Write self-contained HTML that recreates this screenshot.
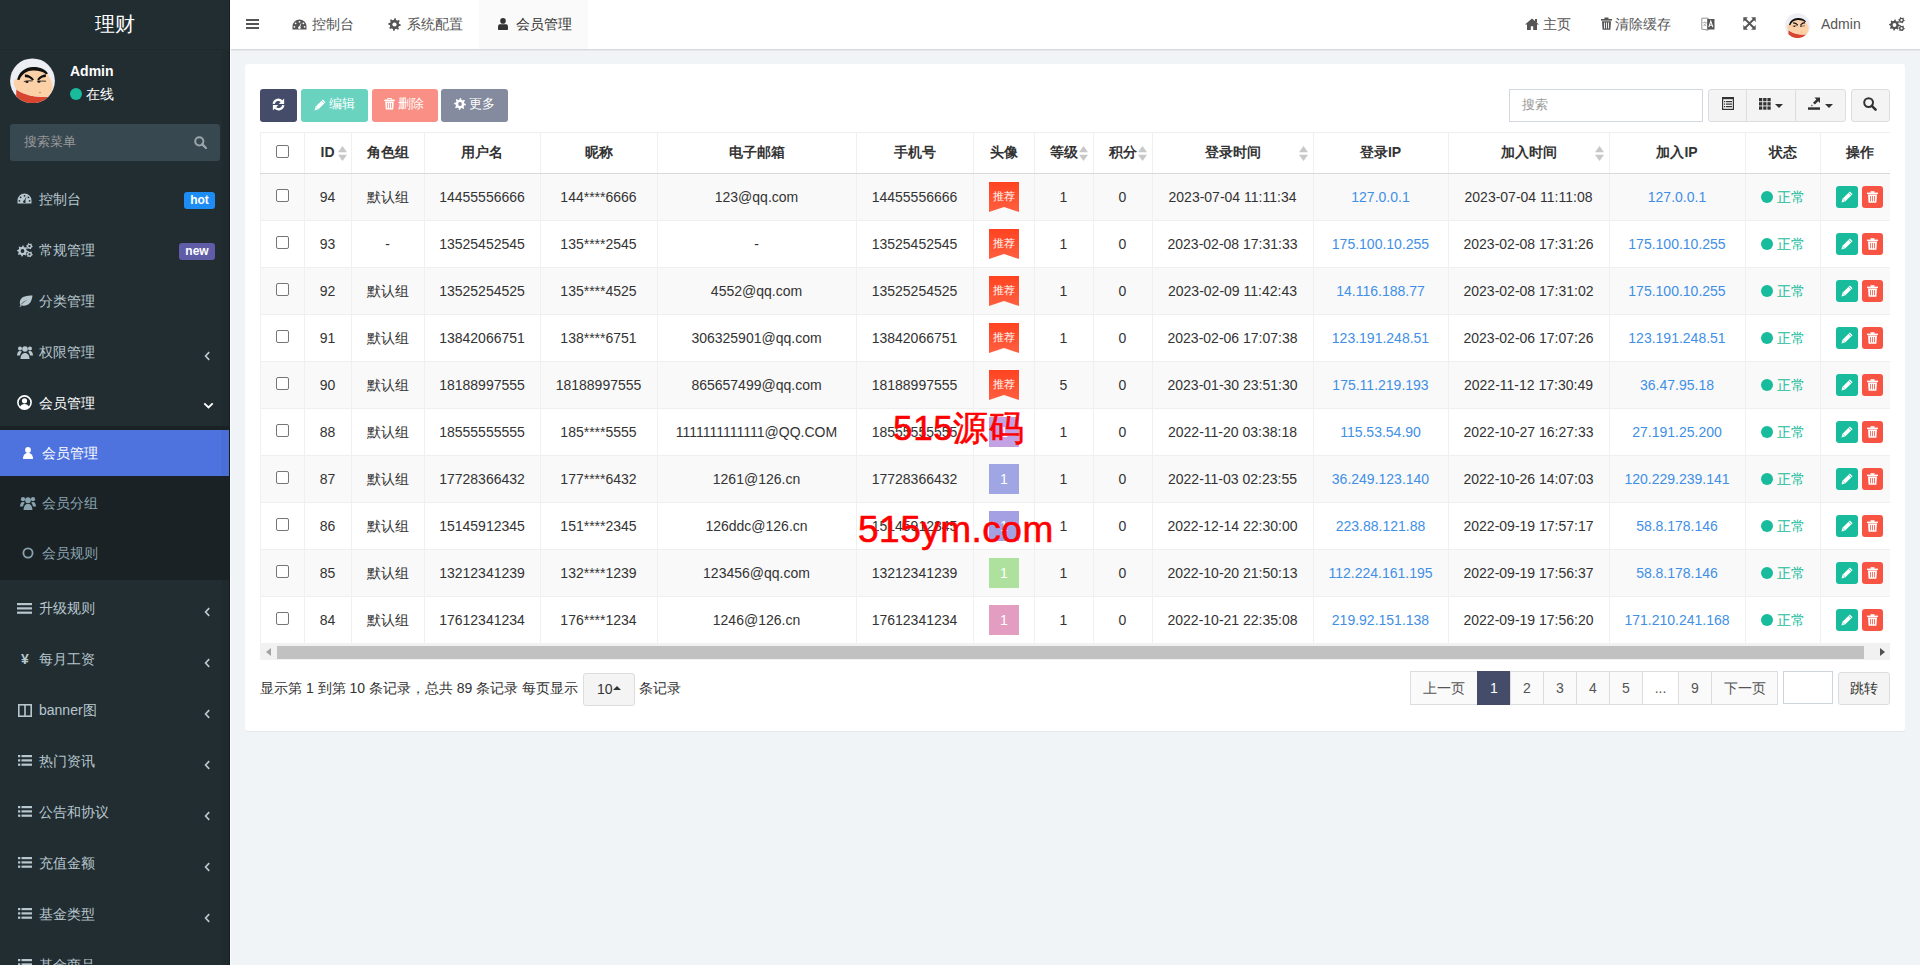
<!DOCTYPE html><html><head><meta charset="utf-8"><title>会员管理</title><style>
*{box-sizing:border-box;margin:0;padding:0}
html,body{width:1920px;height:965px;overflow:hidden}
body{background:#f1f4f6;font-family:"Liberation Sans",sans-serif;font-size:14px;color:#333;position:relative}
.a{position:absolute}
.sb{position:absolute;left:0;top:0;width:230px;height:965px;background:#222d32}
.mi{position:absolute;left:0;width:230px;height:20px;line-height:20px;color:#b8c7ce;font-size:14px;white-space:nowrap}
.mi .t{position:absolute;left:39px;top:0}
.mi svg{position:absolute}
.hd{position:absolute;left:230px;top:0;width:1690px;height:49px;background:#fff}
.nav{position:absolute;top:0;height:49px;line-height:49px;color:#555;font-size:14px;white-space:nowrap}
.nav svg{position:absolute}
.panel{position:absolute;left:245px;top:64px;width:1660px;height:667px;background:#fff;border-radius:3px;box-shadow:0 1px 1px rgba(0,0,0,.05)}
.btn{position:absolute;top:89px;height:33px;border-radius:3px;color:#fff;font-size:13px;line-height:33px;white-space:nowrap}
.btn svg{position:absolute}
.cell{position:absolute;height:46px;line-height:46px;text-align:center;white-space:nowrap;font-size:14px;color:#333}
.hcell{position:absolute;height:41px;line-height:41px;text-align:center;white-space:nowrap;font-size:14px;font-weight:bold;color:#333}
.vl{position:absolute;width:1px;background:#f0f0f0}
.hl{position:absolute;height:1px;background:#efefef}
.lk{color:#3f8fe6}
.pg{position:absolute;top:671px;height:34px;line-height:32px;border:1px solid #ddd;background:#fafafa;color:#555;text-align:center;font-size:14px}
</style></head><body>
<div class="sb">
<div class="a" style="left:222px;top:49px;width:7px;height:916px;background:#20292e"></div>
<div class="a" style="left:229px;top:0;width:1px;height:965px;background:#151d21"></div>
<div class="a" style="left:0;top:0;width:230px;height:49px;line-height:48px;text-align:center;color:#fff;font-size:20px">理财</div>
<div class="a" style="left:0;top:49px;width:222px;height:1px;background:#1f282d"></div>
<svg style="position:absolute;left:10px;top:58px" width="45" height="45" viewBox="0 0 45 45"><defs><clipPath id="cp10"><circle cx="22.5" cy="22.8" r="22.4"/></clipPath></defs><g clip-path="url(#cp10)"><rect width="45" height="46" fill="#eceef3"/><path d="M6.3 31.2 C9 33.5 16 37 23.9 38.2 C30 39 35 39 38.5 38.7 L42 48 L6 48z" fill="#d8462f"/><path d="M3.7 25 C3.5 22 5.5 20.5 7.8 20.5 C10 14 16 10.5 23 10.5 C30 10.5 35 13 37.5 16.5 C40.5 20 42.8 25 42.6 29.5 C42.5 33 41 36.5 38.5 38.7 C35 39 30 39 23.9 38.2 C16 37 9 33.5 6.3 31.2 C5 30 3.8 27.5 3.7 25z" fill="#fdd1a8"/><path d="M7.2 21.8 C8.5 14.5 15 9.3 23 9 C30 8.8 35.5 11.5 38 15.5 L36 16.2 C33 13.6 28.5 12.4 23 12.5 C16 12.8 11.5 16.5 9.5 22z" fill="#111"/><path d="M14.8 16.6 C18.5 16.4 21.8 18.6 24 21.4 L22.4 22.6 C20.3 20.2 17.8 19 15 19.3z" fill="#111"/><path d="M36 16.2 C32.5 16.2 29.3 18.5 27.2 21.2 L28.7 22.4 C30.7 20 33.2 18.9 35.8 18.9z" fill="#111"/><path d="M13.8 23.6 C16 22.8 19 22.6 22.5 23" stroke="#222" stroke-width="0.9" fill="none"/><path d="M27 23.2 C30 23 33 23 36 23.2" stroke="#222" stroke-width="0.9" fill="none"/><ellipse cx="17" cy="24" rx="1.6" ry="1" fill="#111"/><ellipse cx="29" cy="23.8" rx="1.6" ry="1" fill="#111"/><path d="M29 34.5 l2 0" stroke="#a06040" stroke-width="0.6"/></g></svg>
<div class="a" style="left:70px;top:61px;height:20px;line-height:20px;color:#fff;font-weight:bold;font-size:14px">Admin</div>
<div class="a" style="left:70px;top:88px;width:12px;height:12px;border-radius:50%;background:#18bc9c"></div>
<div class="a" style="left:86px;top:84px;height:20px;line-height:20px;color:#fff;font-size:14px">在线</div>
<div class="a" style="left:10px;top:124px;width:210px;height:37px;background:#374850;border-radius:3px"></div>
<div class="a" style="left:24px;top:132px;height:20px;line-height:20px;color:#999;font-size:13px">搜索菜单</div>
<svg style="position:absolute;left:194px;top:136px" width="13" height="13" viewBox="0 0 13 13" fill="currentColor" ><circle cx="5.3" cy="5.3" r="4.1" fill="none" stroke="#9aa6ab" stroke-width="2"/><path d="M8.3 8.3L12 12" stroke="#9aa6ab" stroke-width="2.4" stroke-linecap="round"/></svg>
<div class="mi" style="top:189px;color:#b8c7ce"><svg style="left:17px;top:4px" width="15" height="11" viewBox="0 0 15 11" fill="currentColor"><path d="M7.5 0.5A7 7 0 0 0 0.5 7.5v3h14v-3A7 7 0 0 0 7.5 0.5z"/><g fill="#222d32"><circle cx="7.5" cy="2.8" r="0.9"/><circle cx="3.6" cy="4.3" r="0.9"/><circle cx="2.4" cy="7.8" r="0.9"/><circle cx="12.6" cy="7.8" r="0.9"/><circle cx="11.4" cy="4.3" r="0.9"/><path d="M9.6 3.2L8.1 8.6 6.7 8.3z"/><circle cx="7.4" cy="8.8" r="1.3"/></g></svg><span class="t" style="left:39px">控制台</span><div class="a" style="left:184px;top:3px;width:31px;height:17px;line-height:17px;border-radius:3px;background:#1d8df5;color:#fff;font-weight:bold;font-size:12px;text-align:center">hot</div></div>
<div class="mi" style="top:240px;color:#b8c7ce"><svg style="left:17px;top:3px" width="16" height="14" viewBox="0 0 16 14" fill="currentColor"><polygon points="11.00,8.00 10.89,9.07 9.06,9.47 8.70,10.14 9.39,11.89 8.56,12.57 6.97,11.56 6.25,11.78 5.50,13.50 4.43,13.39 4.03,11.56 3.36,11.20 1.61,11.89 0.93,11.06 1.94,9.47 1.72,8.75 0.00,8.00 0.11,6.93 1.94,6.53 2.30,5.86 1.61,4.11 2.44,3.43 4.03,4.44 4.75,4.22 5.50,2.50 6.57,2.61 6.97,4.44 7.64,4.80 9.39,4.11 10.07,4.94 9.06,6.53 9.28,7.25"/><circle cx="5.5" cy="8" r="3.96"/><circle cx="5.5" cy="8" r="1.9" fill="#222d32"/><polygon points="15.70,3.20 15.59,4.03 14.44,4.32 14.08,4.78 14.10,5.97 13.33,6.29 12.50,5.44 11.92,5.36 10.90,5.97 10.24,5.46 10.56,4.32 10.34,3.78 9.30,3.20 9.41,2.37 10.56,2.08 10.92,1.62 10.90,0.43 11.67,0.11 12.50,0.96 13.08,1.04 14.10,0.43 14.76,0.94 14.44,2.08 14.66,2.62"/><circle cx="12.5" cy="3.2" r="2.30"/><circle cx="12.5" cy="3.2" r="1.1" fill="#222d32"/><polygon points="15.70,11.30 15.59,12.13 14.44,12.42 14.08,12.88 14.10,14.07 13.33,14.39 12.50,13.54 11.92,13.46 10.90,14.07 10.24,13.56 10.56,12.42 10.34,11.88 9.30,11.30 9.41,10.47 10.56,10.18 10.92,9.72 10.90,8.53 11.67,8.21 12.50,9.06 13.08,9.14 14.10,8.53 14.76,9.04 14.44,10.18 14.66,10.72"/><circle cx="12.5" cy="11.3" r="2.30"/><circle cx="12.5" cy="11.3" r="1.1" fill="#222d32"/></svg><span class="t" style="left:39px">常规管理</span><div class="a" style="left:179px;top:3px;width:36px;height:17px;line-height:17px;border-radius:3px;background:#605ca8;color:#fff;font-weight:bold;font-size:12px;text-align:center">new</div></div>
<div class="mi" style="top:291px;color:#b8c7ce"><svg style="left:18px;top:4px" width="15" height="12" viewBox="0 0 15 12" fill="currentColor"><path d="M14.5 0.5C9 0.5 3.5 1 2 6c-0.5 2 0 3.5 0.5 4.2C4 7.5 7 5.5 10 4.5 7 6 4 8.5 1.5 11.5l0.8 0.5c0.6-0.8 1.1-1.4 1.6-1.8C5.5 11 8 11 10.2 9.6 13.8 7.2 14 3 14.5 0.5z"/></svg><span class="t" style="left:39px">分类管理</span></div>
<div class="mi" style="top:342px;color:#b8c7ce"><svg style="left:17px;top:3px" width="16" height="14" viewBox="0 0 16 14" fill="currentColor"><circle cx="8" cy="4" r="2.8"/><path d="M3.5 14c0-3.5 1.8-6 4.5-6s4.5 2.5 4.5 6z"/><circle cx="3" cy="3.5" r="2"/><circle cx="13" cy="3.5" r="2"/><path d="M0 10.5c0-2.5 1.2-4.5 3-4.5 0.8 0 1.4 0.3 1.9 0.8C3.8 7.8 3.2 9 3 10.5z"/><path d="M16 10.5c0-2.5-1.2-4.5-3-4.5-0.8 0-1.4 0.3-1.9 0.8 1.1 1 1.7 2.2 1.9 3.7z"/></svg><span class="t" style="left:39px">权限管理</span><svg style="left:204px;top:9px" width="7" height="10" viewBox="0 0 7 10"><path d="M5.2 1.2L1.6 5l3.6 3.8" stroke="#b8c7ce" stroke-width="1.7" fill="none"/></svg></div>
<div class="mi" style="top:393px;color:#fff"><svg style="left:17px;top:2px" width="15" height="15" viewBox="0 0 15 15" fill="currentColor"><circle cx="7.5" cy="7.5" r="6.6" fill="none" stroke="currentColor" stroke-width="1.6"/><circle cx="7.5" cy="5.8" r="2.6"/><path d="M2.8 12c1-2 2.6-3 4.7-3s3.7 1 4.7 3c-1.2 1.2-2.8 2-4.7 2s-3.5-0.8-4.7-2z"/></svg><span class="t" style="left:39px">会员管理</span><svg style="left:203px;top:9px" width="11" height="8" viewBox="0 0 11 8"><path d="M1.3 1.3l4.2 4.2 4.2-4.2" stroke="#fff" stroke-width="1.8" fill="none"/></svg></div>
<div class="a" style="left:0;top:426px;width:229px;height:154px;background:#1a2226"></div>
<div class="a" style="left:0;top:430px;width:229px;height:46px;background:#4e73df"></div>
<div class="a" style="left:221px;top:430px;width:8px;height:46px;background:#4a6ed6"></div>
<div class="mi" style="top:443px;color:#fff"><svg style="left:23px;top:4px" width="10" height="12" viewBox="0 0 10 12" fill="currentColor"><circle cx="5" cy="3" r="2.9"/><path d="M0 12c0-3.5 1.5-6 5-6s5 2.5 5 6z"/></svg><span class="t" style="left:42px">会员管理</span></div>
<div class="mi" style="top:493px;color:#8aa4af"><svg style="left:20px;top:3px" width="16" height="14" viewBox="0 0 16 14" fill="currentColor"><circle cx="8" cy="4.2" r="2.9"/><path d="M3.6 14c0-3.6 1.8-6.2 4.4-6.2s4.4 2.6 4.4 6.2z"/><circle cx="3" cy="3.2" r="2.1"/><circle cx="13" cy="3.2" r="2.1"/><path d="M0 10.5c0-2.6 1.2-4.6 3-4.6 0.8 0 1.4 0.3 1.9 0.8C3.8 7.8 3.2 9 3 10.5z"/><path d="M16 10.5c0-2.6-1.2-4.6-3-4.6-0.8 0-1.4 0.3-1.9 0.8 1.1 1 1.7 2.2 1.9 3.7z"/></svg><span class="t" style="left:42px">会员分组</span></div>
<div class="mi" style="top:543px;color:#8aa4af"><svg style="left:22px;top:4px" width="12" height="12" viewBox="0 0 12 12" fill="currentColor"><circle cx="6" cy="6" r="4.6" fill="none" stroke="currentColor" stroke-width="1.8"/></svg><span class="t" style="left:42px">会员规则</span></div>
<div class="mi" style="top:598px;color:#b8c7ce"><svg style="left:17px;top:5px" width="15" height="11" viewBox="0 0 15 11" fill="currentColor"><rect x="0" y="0" width="15" height="2.2"/><rect x="0" y="4.3" width="15" height="2.2"/><rect x="0" y="8.6" width="15" height="2.2"/></svg><span class="t" style="left:39px">升级规则</span><svg style="left:204px;top:9px" width="7" height="10" viewBox="0 0 7 10"><path d="M5.2 1.2L1.6 5l3.6 3.8" stroke="#b8c7ce" stroke-width="1.7" fill="none"/></svg></div>
<div class="mi" style="top:649px;color:#b8c7ce"><span class="a" style="left:21px;top:0;font-weight:bold;font-size:14px">¥</span><span class="t" style="left:39px">每月工资</span><svg style="left:204px;top:9px" width="7" height="10" viewBox="0 0 7 10"><path d="M5.2 1.2L1.6 5l3.6 3.8" stroke="#b8c7ce" stroke-width="1.7" fill="none"/></svg></div>
<div class="mi" style="top:700px;color:#b8c7ce"><svg style="left:18px;top:4px" width="14" height="13" viewBox="0 0 14 13" fill="currentColor"><rect x="0.8" y="0.8" width="12.4" height="11.4" fill="none" stroke="currentColor" stroke-width="1.6"/><rect x="6.2" y="0.8" width="1.6" height="11.4"/></svg><span class="t" style="left:39px">banner图</span><svg style="left:204px;top:9px" width="7" height="10" viewBox="0 0 7 10"><path d="M5.2 1.2L1.6 5l3.6 3.8" stroke="#b8c7ce" stroke-width="1.7" fill="none"/></svg></div>
<div class="mi" style="top:751px;color:#b8c7ce"><svg style="left:18px;top:4px" width="14" height="11" viewBox="0 0 14 11" fill="currentColor"><rect x="0" y="0" width="2.3" height="2.2"/><rect x="0" y="4.3" width="2.3" height="2.2"/><rect x="0" y="8.6" width="2.3" height="2.2"/><rect x="3.5" y="0" width="10.5" height="2.2"/><rect x="3.5" y="4.3" width="10.5" height="2.2"/><rect x="3.5" y="8.6" width="10.5" height="2.2"/></svg><span class="t" style="left:39px">热门资讯</span><svg style="left:204px;top:9px" width="7" height="10" viewBox="0 0 7 10"><path d="M5.2 1.2L1.6 5l3.6 3.8" stroke="#b8c7ce" stroke-width="1.7" fill="none"/></svg></div>
<div class="mi" style="top:802px;color:#b8c7ce"><svg style="left:18px;top:4px" width="14" height="11" viewBox="0 0 14 11" fill="currentColor"><rect x="0" y="0" width="2.3" height="2.2"/><rect x="0" y="4.3" width="2.3" height="2.2"/><rect x="0" y="8.6" width="2.3" height="2.2"/><rect x="3.5" y="0" width="10.5" height="2.2"/><rect x="3.5" y="4.3" width="10.5" height="2.2"/><rect x="3.5" y="8.6" width="10.5" height="2.2"/></svg><span class="t" style="left:39px">公告和协议</span><svg style="left:204px;top:9px" width="7" height="10" viewBox="0 0 7 10"><path d="M5.2 1.2L1.6 5l3.6 3.8" stroke="#b8c7ce" stroke-width="1.7" fill="none"/></svg></div>
<div class="mi" style="top:853px;color:#b8c7ce"><svg style="left:18px;top:4px" width="14" height="11" viewBox="0 0 14 11" fill="currentColor"><rect x="0" y="0" width="2.3" height="2.2"/><rect x="0" y="4.3" width="2.3" height="2.2"/><rect x="0" y="8.6" width="2.3" height="2.2"/><rect x="3.5" y="0" width="10.5" height="2.2"/><rect x="3.5" y="4.3" width="10.5" height="2.2"/><rect x="3.5" y="8.6" width="10.5" height="2.2"/></svg><span class="t" style="left:39px">充值金额</span><svg style="left:204px;top:9px" width="7" height="10" viewBox="0 0 7 10"><path d="M5.2 1.2L1.6 5l3.6 3.8" stroke="#b8c7ce" stroke-width="1.7" fill="none"/></svg></div>
<div class="mi" style="top:904px;color:#b8c7ce"><svg style="left:18px;top:4px" width="14" height="11" viewBox="0 0 14 11" fill="currentColor"><rect x="0" y="0" width="2.3" height="2.2"/><rect x="0" y="4.3" width="2.3" height="2.2"/><rect x="0" y="8.6" width="2.3" height="2.2"/><rect x="3.5" y="0" width="10.5" height="2.2"/><rect x="3.5" y="4.3" width="10.5" height="2.2"/><rect x="3.5" y="8.6" width="10.5" height="2.2"/></svg><span class="t" style="left:39px">基金类型</span><svg style="left:204px;top:9px" width="7" height="10" viewBox="0 0 7 10"><path d="M5.2 1.2L1.6 5l3.6 3.8" stroke="#b8c7ce" stroke-width="1.7" fill="none"/></svg></div>
<div class="mi" style="top:955px;color:#b8c7ce"><svg style="left:18px;top:4px" width="14" height="11" viewBox="0 0 14 11" fill="currentColor"><rect x="0" y="0" width="2.3" height="2.2"/><rect x="0" y="4.3" width="2.3" height="2.2"/><rect x="0" y="8.6" width="2.3" height="2.2"/><rect x="3.5" y="0" width="10.5" height="2.2"/><rect x="3.5" y="4.3" width="10.5" height="2.2"/><rect x="3.5" y="8.6" width="10.5" height="2.2"/></svg><span class="t" style="left:39px">基金商品</span></div>
</div>
<div class="hd">
<div class="a" style="left:249px;top:0;width:109px;height:49px;background:#fafafa"></div>
</div>
<div class="a" style="left:230px;top:49px;width:1690px;height:1px;background:#d7dadc"></div>
<div class="a" style="left:230px;top:50px;width:1690px;height:1px;background:#e6e9eb"></div>
<div class="a" style="left:230px;top:49px;width:1px;height:916px;background:#fafbfc"></div>
<svg style="position:absolute;left:246px;top:19px;color:#555" width="13" height="10" viewBox="0 0 13 10" fill="currentColor"><rect y="0" width="13" height="2"/><rect y="4" width="13" height="2"/><rect y="8" width="13" height="2"/></svg>
<svg style="position:absolute;left:292px;top:19px;color:#555" width="15" height="11" viewBox="0 0 15 11" fill="currentColor"><path d="M7.5 0.5A7 7 0 0 0 0.5 7.5v3h14v-3A7 7 0 0 0 7.5 0.5z"/><g fill="#fff"><circle cx="7.5" cy="2.8" r="0.9"/><circle cx="3.6" cy="4.3" r="0.9"/><circle cx="2.4" cy="7.8" r="0.9"/><circle cx="12.6" cy="7.8" r="0.9"/><circle cx="11.4" cy="4.3" r="0.9"/><path d="M9.6 3.2L8.1 8.6 6.7 8.3z"/><circle cx="7.4" cy="8.8" r="1.3"/></g></svg>
<div class="a" style="left:312px;top:14px;height:20px;line-height:20px;color:#555;font-size:14px;white-space:nowrap">控制台</div>
<svg style="position:absolute;left:388px;top:18px;color:#555" width="13" height="13" viewBox="0 0 13 13" fill="currentColor"><polygon points="12.80,6.50 12.68,7.73 10.57,8.19 10.17,8.95 10.95,10.95 10.00,11.74 8.19,10.57 7.36,10.83 6.50,12.80 5.27,12.68 4.81,10.57 4.05,10.17 2.05,10.95 1.26,10.00 2.43,8.19 2.17,7.36 0.20,6.50 0.32,5.27 2.43,4.81 2.83,4.05 2.05,2.05 3.00,1.26 4.81,2.43 5.64,2.17 6.50,0.20 7.73,0.32 8.19,2.43 8.95,2.83 10.95,2.05 11.74,3.00 10.57,4.81 10.83,5.64"/><circle cx="6.5" cy="6.5" r="4.54"/><circle cx="6.5" cy="6.5" r="2.1" fill="#fff"/></svg>
<div class="a" style="left:407px;top:14px;height:20px;line-height:20px;color:#555;font-size:14px;white-space:nowrap">系统配置</div>
<svg style="position:absolute;left:498px;top:18px;color:#333" width="10" height="12" viewBox="0 0 10 12" fill="currentColor"><circle cx="5" cy="2.9" r="2.8"/><path d="M1.8 6.3h6.4c1.2 0 1.8 1.2 1.8 3v1.6c0 0.7-0.4 1.1-1 1.1H1c-0.6 0-1-0.4-1-1.1V9.3c0-1.8 0.6-3 1.8-3z"/></svg>
<div class="a" style="left:516px;top:14px;height:20px;line-height:20px;color:#333;font-size:14px;white-space:nowrap">会员管理</div>
<svg style="position:absolute;left:1525px;top:18px;color:#555" width="14" height="12" viewBox="0 0 14 12" fill="currentColor"><path d="M7 0.5L0 6.5h2v5.5h3.8V8.3h2.4V12H12V6.5h2z"/><rect x="10" y="1" width="2" height="3.5"/></svg>
<div class="a" style="left:1543px;top:14px;height:20px;line-height:20px;color:#555;font-size:14px;white-space:nowrap">主页</div>
<svg style="position:absolute;left:1601px;top:17px;color:#555" width="11" height="13" viewBox="0 0 11 13" fill="currentColor"><rect x="0" y="2" width="11" height="1.6"/><rect x="3.5" y="0.5" width="4" height="1.8"/><path d="M1 4.2h9l-0.6 8.6H1.6z"/><g fill="#fff"><rect x="3" y="5.5" width="0.9" height="6"/><rect x="5" y="5.5" width="0.9" height="6"/><rect x="7" y="5.5" width="0.9" height="6"/></g></svg>
<div class="a" style="left:1615px;top:14px;height:20px;line-height:20px;color:#555;font-size:14px;white-space:nowrap">清除缓存</div>
<svg style="position:absolute;left:1701px;top:17px;color:#555" width="14" height="14" viewBox="0 0 14 14" fill="currentColor"><path d="M0.8 1.2h6.4v11.8L0.8 12.2z" fill="#fff" stroke="#888" stroke-width="0.9"/><path d="M2 5.5h3.5M3.7 4.5v1M2.4 9c1.5-0.8 2.6-2 2.8-3.5M2.8 6.8c0.6 1 1.5 1.8 2.5 2.2" stroke="#999" stroke-width="0.7" fill="none"/><path d="M6.2 2h7.3v10.5H6.2z" fill="#555"/><path d="M7.8 10.2l2-6 2 6M8.5 8.3h2.6" stroke="#fff" stroke-width="1.1" fill="none"/><path d="M5.5 13.3l1.5-1" stroke="#888" stroke-width="0.8"/></svg>
<svg style="position:absolute;left:1743px;top:17px;color:#555" width="13" height="13" viewBox="0 0 13 13" fill="currentColor"><path d="M2 2L11 11M11 2L2 11" stroke="#555" stroke-width="1.8"/><path d="M0.3 0.3h4.6L0.3 4.9z"/><path d="M12.7 0.3v4.6L8.1 0.3z"/><path d="M0.3 12.7V8.1l4.6 4.6z"/><path d="M12.7 12.7H8.1l4.6-4.6z"/></svg>
<svg style="position:absolute;left:1785px;top:13px" width="25" height="25" viewBox="0 0 45 45"><defs><clipPath id="cp1785"><circle cx="22.5" cy="22.8" r="22.4"/></clipPath></defs><g clip-path="url(#cp1785)"><rect width="45" height="46" fill="#eceef3"/><path d="M6.3 31.2 C9 33.5 16 37 23.9 38.2 C30 39 35 39 38.5 38.7 L42 48 L6 48z" fill="#d8462f"/><path d="M3.7 25 C3.5 22 5.5 20.5 7.8 20.5 C10 14 16 10.5 23 10.5 C30 10.5 35 13 37.5 16.5 C40.5 20 42.8 25 42.6 29.5 C42.5 33 41 36.5 38.5 38.7 C35 39 30 39 23.9 38.2 C16 37 9 33.5 6.3 31.2 C5 30 3.8 27.5 3.7 25z" fill="#fdd1a8"/><path d="M7.2 21.8 C8.5 14.5 15 9.3 23 9 C30 8.8 35.5 11.5 38 15.5 L36 16.2 C33 13.6 28.5 12.4 23 12.5 C16 12.8 11.5 16.5 9.5 22z" fill="#111"/><path d="M14.8 16.6 C18.5 16.4 21.8 18.6 24 21.4 L22.4 22.6 C20.3 20.2 17.8 19 15 19.3z" fill="#111"/><path d="M36 16.2 C32.5 16.2 29.3 18.5 27.2 21.2 L28.7 22.4 C30.7 20 33.2 18.9 35.8 18.9z" fill="#111"/><path d="M13.8 23.6 C16 22.8 19 22.6 22.5 23" stroke="#222" stroke-width="0.9" fill="none"/><path d="M27 23.2 C30 23 33 23 36 23.2" stroke="#222" stroke-width="0.9" fill="none"/><ellipse cx="17" cy="24" rx="1.6" ry="1" fill="#111"/><ellipse cx="29" cy="23.8" rx="1.6" ry="1" fill="#111"/><path d="M29 34.5 l2 0" stroke="#a06040" stroke-width="0.6"/></g></svg>
<div class="a" style="left:1821px;top:14px;height:20px;line-height:20px;color:#555;font-size:14px;white-space:nowrap">Admin</div>
<svg style="position:absolute;left:1889px;top:17px;color:#555" width="16" height="14" viewBox="0 0 16 14" fill="currentColor"><polygon points="11.00,8.00 10.89,9.07 9.06,9.47 8.70,10.14 9.39,11.89 8.56,12.57 6.97,11.56 6.25,11.78 5.50,13.50 4.43,13.39 4.03,11.56 3.36,11.20 1.61,11.89 0.93,11.06 1.94,9.47 1.72,8.75 0.00,8.00 0.11,6.93 1.94,6.53 2.30,5.86 1.61,4.11 2.44,3.43 4.03,4.44 4.75,4.22 5.50,2.50 6.57,2.61 6.97,4.44 7.64,4.80 9.39,4.11 10.07,4.94 9.06,6.53 9.28,7.25"/><circle cx="5.5" cy="8" r="3.96"/><circle cx="5.5" cy="8" r="1.9" fill="#fff"/><polygon points="15.70,3.20 15.59,4.03 14.44,4.32 14.08,4.78 14.10,5.97 13.33,6.29 12.50,5.44 11.92,5.36 10.90,5.97 10.24,5.46 10.56,4.32 10.34,3.78 9.30,3.20 9.41,2.37 10.56,2.08 10.92,1.62 10.90,0.43 11.67,0.11 12.50,0.96 13.08,1.04 14.10,0.43 14.76,0.94 14.44,2.08 14.66,2.62"/><circle cx="12.5" cy="3.2" r="2.30"/><circle cx="12.5" cy="3.2" r="1.1" fill="#fff"/><polygon points="15.70,11.30 15.59,12.13 14.44,12.42 14.08,12.88 14.10,14.07 13.33,14.39 12.50,13.54 11.92,13.46 10.90,14.07 10.24,13.56 10.56,12.42 10.34,11.88 9.30,11.30 9.41,10.47 10.56,10.18 10.92,9.72 10.90,8.53 11.67,8.21 12.50,9.06 13.08,9.14 14.10,8.53 14.76,9.04 14.44,10.18 14.66,10.72"/><circle cx="12.5" cy="11.3" r="2.30"/><circle cx="12.5" cy="11.3" r="1.1" fill="#fff"/></svg>
<div class="panel"></div>
<div class="btn" style="left:260px;width:37px;background:#444c69"><svg style="left:12px;top:9px" width="13" height="13" viewBox="0 0 13 13" fill="#fff"><path d="M1.7 5.9A4.7 4.7 0 0 1 10.2 3.8" stroke="#fff" stroke-width="2.3" fill="none"/><path d="M6.7 5.9h5.4V0.6z"/><path d="M11.3 7.1A4.7 4.7 0 0 1 2.8 9.2" stroke="#fff" stroke-width="2.3" fill="none"/><path d="M6.3 7.1H0.9v5.3z"/></svg></div>
<div class="btn" style="left:301px;width:67px;background:#69d3bf"><svg style="left:13px;top:10px" width="12" height="12" viewBox="0 0 12 12" fill="#fff"><path d="M0.5 11.5L1.46 7.86 8.86 0.46 11.54 3.14 4.14 10.54z"/><path d="M7.6 1.7L10.3 4.4" stroke="#69d3bf" stroke-width="0.7"/><path d="M1.6 8L4 10.4" stroke="#69d3bf" stroke-width="0.5"/></svg><span class="a" style="left:28px;top:-2px">编辑</span></div>
<div class="btn" style="left:372px;width:66px;background:#fa9085"><svg style="left:12px;top:9px" width="11" height="12" viewBox="0 0 11 12" fill="#fff"><rect x="0.3" y="1.6" width="10.4" height="1.5"/><path d="M3.6 1.8V0.4h3.8v1.4" stroke="#fff" stroke-width="1" fill="none"/><path d="M1.2 3.4h8.6l-0.6 8.2H1.8z"/><g fill="#fa9085"><rect x="3.1" y="4.8" width="0.8" height="5.3"/><rect x="5.1" y="4.8" width="0.8" height="5.3"/><rect x="7.1" y="4.8" width="0.8" height="5.3"/></g></svg><span class="a" style="left:26px;top:-2px">删除</span></div>
<div class="btn" style="left:441px;width:67px;background:#858b9e"><svg style="left:13px;top:9px" width="12" height="12" viewBox="0 0 12 12" fill="#fff"><polygon points="11.90,6.00 11.79,7.15 9.82,7.58 9.43,8.29 10.17,10.17 9.28,10.91 7.58,9.82 6.81,10.05 6.00,11.90 4.85,11.79 4.42,9.82 3.71,9.43 1.83,10.17 1.09,9.28 2.18,7.58 1.95,6.81 0.10,6.00 0.21,4.85 2.18,4.42 2.57,3.71 1.83,1.83 2.72,1.09 4.42,2.18 5.19,1.95 6.00,0.10 7.15,0.21 7.58,2.18 8.29,2.57 10.17,1.83 10.91,2.72 9.82,4.42 10.05,5.19"/><circle cx="6" cy="6" r="4.25"/><circle cx="6" cy="6" r="1.9" fill="#858b9e"/></svg><span class="a" style="left:28px;top:-2px">更多</span></div>
<div class="a" style="left:1509px;top:89px;width:194px;height:33px;border:1px solid #d2d6de;background:#fff"></div>
<div class="a" style="left:1522px;top:95px;height:20px;line-height:20px;color:#999;font-size:13px">搜索</div>
<div class="a" style="left:1708px;top:89px;width:138px;height:33px;border:1px solid #ddd;background:#f4f4f4;border-radius:3px"></div>
<div class="a" style="left:1746px;top:89px;width:1px;height:33px;background:#ddd"></div>
<div class="a" style="left:1795px;top:89px;width:1px;height:33px;background:#ddd"></div>
<div class="a" style="left:1851px;top:89px;width:39px;height:33px;border:1px solid #ddd;background:#f4f4f4;border-radius:3px"></div>
<svg style="position:absolute;left:1722px;top:97px;color:#333" width="12" height="13" viewBox="0 0 12 13" fill="currentColor"><rect x="0.6" y="0.6" width="10.8" height="11.8" fill="none" stroke="#333" stroke-width="1.2"/><rect x="0" y="0" width="12" height="2.2" fill="#333"/><g fill="#333"><rect x="2" y="4" width="1.2" height="1.2"/><rect x="4" y="4" width="6" height="1.2"/><rect x="2" y="6.5" width="1.2" height="1.2"/><rect x="4" y="6.5" width="6" height="1.2"/><rect x="2" y="9" width="1.2" height="1.2"/><rect x="4" y="9" width="6" height="1.2"/></g></svg>
<svg style="position:absolute;left:1759px;top:98px;color:#333" width="12" height="12" viewBox="0 0 12 12" fill="currentColor"><rect x="0.0" y="0.0" width="3.3" height="3.3"/><rect x="4.2" y="0.0" width="3.3" height="3.3"/><rect x="8.4" y="0.0" width="3.3" height="3.3"/><rect x="0.0" y="4.2" width="3.3" height="3.3"/><rect x="4.2" y="4.2" width="3.3" height="3.3"/><rect x="8.4" y="4.2" width="3.3" height="3.3"/><rect x="0.0" y="8.4" width="3.3" height="3.3"/><rect x="4.2" y="8.4" width="3.3" height="3.3"/><rect x="8.4" y="8.4" width="3.3" height="3.3"/></svg>
<svg style="position:absolute;left:1775px;top:104px;color:#333" width="8" height="4" viewBox="0 0 8 4" fill="currentColor"><path d="M0 0h8L4 4z"/></svg>
<svg style="position:absolute;left:1808px;top:97px;color:#333" width="13" height="13" viewBox="0 0 13 13" fill="currentColor"><rect x="0" y="10.3" width="12" height="2.5"/><path d="M6.5 0.5h5.5V6L10.2 4.2 6.8 7.6 5 5.8l3.4-3.4z"/><path d="M3.5 7.5L5 9 3.2 9.3z"/></svg>
<svg style="position:absolute;left:1825px;top:104px;color:#333" width="8" height="4" viewBox="0 0 8 4" fill="currentColor"><path d="M0 0h8L4 4z"/></svg>
<svg style="position:absolute;left:1863px;top:97px;color:#333" width="14" height="14" viewBox="0 0 14 14" fill="currentColor"><circle cx="5.6" cy="5.6" r="4.4" fill="none" stroke="#333" stroke-width="2"/><path d="M8.8 8.8l3.8 3.8" stroke="#333" stroke-width="2.5" stroke-linecap="round"/></svg>
<div class="a" style="left:260px;top:174px;width:1630px;height:46px;background:#f9f9f9"></div>
<div class="hl" style="left:260px;top:220px;width:1630px"></div>
<div class="a" style="left:260px;top:221px;width:1630px;height:46px;background:#fff"></div>
<div class="hl" style="left:260px;top:267px;width:1630px"></div>
<div class="a" style="left:260px;top:268px;width:1630px;height:46px;background:#f9f9f9"></div>
<div class="hl" style="left:260px;top:314px;width:1630px"></div>
<div class="a" style="left:260px;top:315px;width:1630px;height:46px;background:#fff"></div>
<div class="hl" style="left:260px;top:361px;width:1630px"></div>
<div class="a" style="left:260px;top:362px;width:1630px;height:46px;background:#f9f9f9"></div>
<div class="hl" style="left:260px;top:408px;width:1630px"></div>
<div class="a" style="left:260px;top:409px;width:1630px;height:46px;background:#fff"></div>
<div class="hl" style="left:260px;top:455px;width:1630px"></div>
<div class="a" style="left:260px;top:456px;width:1630px;height:46px;background:#f9f9f9"></div>
<div class="hl" style="left:260px;top:502px;width:1630px"></div>
<div class="a" style="left:260px;top:503px;width:1630px;height:46px;background:#fff"></div>
<div class="hl" style="left:260px;top:549px;width:1630px"></div>
<div class="a" style="left:260px;top:550px;width:1630px;height:46px;background:#f9f9f9"></div>
<div class="hl" style="left:260px;top:596px;width:1630px"></div>
<div class="a" style="left:260px;top:597px;width:1630px;height:46px;background:#fff"></div>
<div class="hl" style="left:260px;top:643px;width:1630px"></div>
<div class="vl" style="left:260px;top:132px;height:511px"></div>
<div class="vl" style="left:304px;top:132px;height:511px"></div>
<div class="vl" style="left:351px;top:132px;height:511px"></div>
<div class="vl" style="left:424px;top:132px;height:511px"></div>
<div class="vl" style="left:540px;top:132px;height:511px"></div>
<div class="vl" style="left:657px;top:132px;height:511px"></div>
<div class="vl" style="left:856px;top:132px;height:511px"></div>
<div class="vl" style="left:973px;top:132px;height:511px"></div>
<div class="vl" style="left:1034px;top:132px;height:511px"></div>
<div class="vl" style="left:1093px;top:132px;height:511px"></div>
<div class="vl" style="left:1152px;top:132px;height:511px"></div>
<div class="vl" style="left:1313px;top:132px;height:511px"></div>
<div class="vl" style="left:1448px;top:132px;height:511px"></div>
<div class="vl" style="left:1609px;top:132px;height:511px"></div>
<div class="vl" style="left:1745px;top:132px;height:511px"></div>
<div class="vl" style="left:1820px;top:132px;height:511px"></div>
<div class="hl" style="left:260px;top:132px;width:1630px"></div>
<div class="a" style="left:260px;top:173px;width:1630px;height:1px;background:#d9d9d9"></div>
<div class="a" style="left:276px;top:145px;width:13px;height:13px;border:1px solid #767676;border-radius:2px;background:#fff"></div>
<div class="hcell" style="left:304px;top:132px;width:47px">ID</div>
<svg style="position:absolute;left:338px;top:146px" width="9" height="15" viewBox="0 0 9 15" fill="#c8c8c8"><path d="M4.5 0L9 6.3H0z"/><path d="M4.5 15L9 8.7H0z"/></svg>
<div class="hcell" style="left:351px;top:132px;width:73px">角色组</div>
<div class="hcell" style="left:424px;top:132px;width:116px">用户名</div>
<div class="hcell" style="left:540px;top:132px;width:117px">昵称</div>
<div class="hcell" style="left:657px;top:132px;width:199px">电子邮箱</div>
<div class="hcell" style="left:856px;top:132px;width:117px">手机号</div>
<div class="hcell" style="left:973px;top:132px;width:61px">头像</div>
<div class="hcell" style="left:1034px;top:132px;width:59px">等级</div>
<svg style="position:absolute;left:1079px;top:146px" width="9" height="15" viewBox="0 0 9 15" fill="#c8c8c8"><path d="M4.5 0L9 6.3H0z"/><path d="M4.5 15L9 8.7H0z"/></svg>
<div class="hcell" style="left:1093px;top:132px;width:59px">积分</div>
<svg style="position:absolute;left:1138px;top:146px" width="9" height="15" viewBox="0 0 9 15" fill="#c8c8c8"><path d="M4.5 0L9 6.3H0z"/><path d="M4.5 15L9 8.7H0z"/></svg>
<div class="hcell" style="left:1152px;top:132px;width:161px">登录时间</div>
<svg style="position:absolute;left:1299px;top:146px" width="9" height="15" viewBox="0 0 9 15" fill="#c8c8c8"><path d="M4.5 0L9 6.3H0z"/><path d="M4.5 15L9 8.7H0z"/></svg>
<div class="hcell" style="left:1313px;top:132px;width:135px">登录IP</div>
<div class="hcell" style="left:1448px;top:132px;width:161px">加入时间</div>
<svg style="position:absolute;left:1595px;top:146px" width="9" height="15" viewBox="0 0 9 15" fill="#c8c8c8"><path d="M4.5 0L9 6.3H0z"/><path d="M4.5 15L9 8.7H0z"/></svg>
<div class="hcell" style="left:1609px;top:132px;width:136px">加入IP</div>
<div class="hcell" style="left:1745px;top:132px;width:75px">状态</div>
<div class="hcell" style="left:1820px;top:132px;width:79px">操作</div>
<div class="a" style="left:276px;top:189px;width:13px;height:13px;border:1px solid #767676;border-radius:2px;background:#fff"></div>
<div class="cell" style="left:304px;top:174px;width:47px;">94</div>
<div class="cell" style="left:351px;top:174px;width:73px;">默认组</div>
<div class="cell" style="left:424px;top:174px;width:116px;">14455556666</div>
<div class="cell" style="left:540px;top:174px;width:117px;">144****6666</div>
<div class="cell" style="left:657px;top:174px;width:199px;">123@qq.com</div>
<div class="cell" style="left:856px;top:174px;width:117px;">14455556666</div>
<svg style="position:absolute;left:989px;top:182px" width="30" height="30" viewBox="0 0 30 30"><defs><linearGradient id="g0" x1="0" y1="0" x2="0" y2="1"><stop offset="0" stop-color="#ff4320"/><stop offset="1" stop-color="#ff5f40"/></linearGradient></defs><path d="M0 0h30v30L15 25 0 30z" fill="url(#g0)"/></svg>
<div class="a" style="left:989px;top:187px;width:30px;height:18px;line-height:18px;text-align:center;color:#fff;font-size:11px">推荐</div>
<div class="cell" style="left:1034px;top:174px;width:59px;">1</div>
<div class="cell" style="left:1093px;top:174px;width:59px;">0</div>
<div class="cell" style="left:1152px;top:174px;width:161px;">2023-07-04 11:11:34</div>
<div class="cell" style="left:1313px;top:174px;width:135px;color:#3f8fe6;">127.0.0.1</div>
<div class="cell" style="left:1448px;top:174px;width:161px;">2023-07-04 11:11:08</div>
<div class="cell" style="left:1609px;top:174px;width:136px;color:#3f8fe6;">127.0.0.1</div>
<div class="a" style="left:1761px;top:191px;width:12px;height:12px;border-radius:50%;background:#18bc9c"></div>
<div class="a" style="left:1777px;top:187px;height:20px;line-height:20px;color:#18bc9c;font-size:14px">正常</div>
<div class="a" style="left:1836px;top:186px;width:22px;height:22px;border-radius:3px;background:#18bc9c"></div>
<svg style="position:absolute;left:1841px;top:191px" width="12" height="12" viewBox="0 0 12 12" fill="#fff"><path d="M0.5 11.5L1.46 7.86 8.86 0.46 11.54 3.14 4.14 10.54z"/><path d="M7.6 1.7L10.3 4.4" stroke="#18bc9c" stroke-width="0.7"/><path d="M1.6 8L4 10.4" stroke="#18bc9c" stroke-width="0.5"/></svg>
<div class="a" style="left:1862px;top:186px;width:21px;height:22px;border-radius:3px;background:#f75444"></div>
<svg style="position:absolute;left:1867px;top:191px" width="11" height="12" viewBox="0 0 11 12" fill="#fff"><rect x="0" y="1.6" width="11" height="1.5"/><rect x="3.5" y="0.2" width="4" height="1.7"/><path d="M1 3.6h9l-0.6 8.2H1.6z"/><g fill="#f75444"><rect x="3" y="5" width="0.8" height="5.3"/><rect x="5.1" y="5" width="0.8" height="5.3"/><rect x="7.2" y="5" width="0.8" height="5.3"/></g></svg>
<div class="a" style="left:276px;top:236px;width:13px;height:13px;border:1px solid #767676;border-radius:2px;background:#fff"></div>
<div class="cell" style="left:304px;top:221px;width:47px;">93</div>
<div class="cell" style="left:351px;top:221px;width:73px;">-</div>
<div class="cell" style="left:424px;top:221px;width:116px;">13525452545</div>
<div class="cell" style="left:540px;top:221px;width:117px;">135****2545</div>
<div class="cell" style="left:657px;top:221px;width:199px;">-</div>
<div class="cell" style="left:856px;top:221px;width:117px;">13525452545</div>
<svg style="position:absolute;left:989px;top:229px" width="30" height="30" viewBox="0 0 30 30"><defs><linearGradient id="g1" x1="0" y1="0" x2="0" y2="1"><stop offset="0" stop-color="#ff4320"/><stop offset="1" stop-color="#ff5f40"/></linearGradient></defs><path d="M0 0h30v30L15 25 0 30z" fill="url(#g1)"/></svg>
<div class="a" style="left:989px;top:234px;width:30px;height:18px;line-height:18px;text-align:center;color:#fff;font-size:11px">推荐</div>
<div class="cell" style="left:1034px;top:221px;width:59px;">1</div>
<div class="cell" style="left:1093px;top:221px;width:59px;">0</div>
<div class="cell" style="left:1152px;top:221px;width:161px;">2023-02-08 17:31:33</div>
<div class="cell" style="left:1313px;top:221px;width:135px;color:#3f8fe6;">175.100.10.255</div>
<div class="cell" style="left:1448px;top:221px;width:161px;">2023-02-08 17:31:26</div>
<div class="cell" style="left:1609px;top:221px;width:136px;color:#3f8fe6;">175.100.10.255</div>
<div class="a" style="left:1761px;top:238px;width:12px;height:12px;border-radius:50%;background:#18bc9c"></div>
<div class="a" style="left:1777px;top:234px;height:20px;line-height:20px;color:#18bc9c;font-size:14px">正常</div>
<div class="a" style="left:1836px;top:233px;width:22px;height:22px;border-radius:3px;background:#18bc9c"></div>
<svg style="position:absolute;left:1841px;top:238px" width="12" height="12" viewBox="0 0 12 12" fill="#fff"><path d="M0.5 11.5L1.46 7.86 8.86 0.46 11.54 3.14 4.14 10.54z"/><path d="M7.6 1.7L10.3 4.4" stroke="#18bc9c" stroke-width="0.7"/><path d="M1.6 8L4 10.4" stroke="#18bc9c" stroke-width="0.5"/></svg>
<div class="a" style="left:1862px;top:233px;width:21px;height:22px;border-radius:3px;background:#f75444"></div>
<svg style="position:absolute;left:1867px;top:238px" width="11" height="12" viewBox="0 0 11 12" fill="#fff"><rect x="0" y="1.6" width="11" height="1.5"/><rect x="3.5" y="0.2" width="4" height="1.7"/><path d="M1 3.6h9l-0.6 8.2H1.6z"/><g fill="#f75444"><rect x="3" y="5" width="0.8" height="5.3"/><rect x="5.1" y="5" width="0.8" height="5.3"/><rect x="7.2" y="5" width="0.8" height="5.3"/></g></svg>
<div class="a" style="left:276px;top:283px;width:13px;height:13px;border:1px solid #767676;border-radius:2px;background:#fff"></div>
<div class="cell" style="left:304px;top:268px;width:47px;">92</div>
<div class="cell" style="left:351px;top:268px;width:73px;">默认组</div>
<div class="cell" style="left:424px;top:268px;width:116px;">13525254525</div>
<div class="cell" style="left:540px;top:268px;width:117px;">135****4525</div>
<div class="cell" style="left:657px;top:268px;width:199px;">4552@qq.com</div>
<div class="cell" style="left:856px;top:268px;width:117px;">13525254525</div>
<svg style="position:absolute;left:989px;top:276px" width="30" height="30" viewBox="0 0 30 30"><defs><linearGradient id="g2" x1="0" y1="0" x2="0" y2="1"><stop offset="0" stop-color="#ff4320"/><stop offset="1" stop-color="#ff5f40"/></linearGradient></defs><path d="M0 0h30v30L15 25 0 30z" fill="url(#g2)"/></svg>
<div class="a" style="left:989px;top:281px;width:30px;height:18px;line-height:18px;text-align:center;color:#fff;font-size:11px">推荐</div>
<div class="cell" style="left:1034px;top:268px;width:59px;">1</div>
<div class="cell" style="left:1093px;top:268px;width:59px;">0</div>
<div class="cell" style="left:1152px;top:268px;width:161px;">2023-02-09 11:42:43</div>
<div class="cell" style="left:1313px;top:268px;width:135px;color:#3f8fe6;">14.116.188.77</div>
<div class="cell" style="left:1448px;top:268px;width:161px;">2023-02-08 17:31:02</div>
<div class="cell" style="left:1609px;top:268px;width:136px;color:#3f8fe6;">175.100.10.255</div>
<div class="a" style="left:1761px;top:285px;width:12px;height:12px;border-radius:50%;background:#18bc9c"></div>
<div class="a" style="left:1777px;top:281px;height:20px;line-height:20px;color:#18bc9c;font-size:14px">正常</div>
<div class="a" style="left:1836px;top:280px;width:22px;height:22px;border-radius:3px;background:#18bc9c"></div>
<svg style="position:absolute;left:1841px;top:285px" width="12" height="12" viewBox="0 0 12 12" fill="#fff"><path d="M0.5 11.5L1.46 7.86 8.86 0.46 11.54 3.14 4.14 10.54z"/><path d="M7.6 1.7L10.3 4.4" stroke="#18bc9c" stroke-width="0.7"/><path d="M1.6 8L4 10.4" stroke="#18bc9c" stroke-width="0.5"/></svg>
<div class="a" style="left:1862px;top:280px;width:21px;height:22px;border-radius:3px;background:#f75444"></div>
<svg style="position:absolute;left:1867px;top:285px" width="11" height="12" viewBox="0 0 11 12" fill="#fff"><rect x="0" y="1.6" width="11" height="1.5"/><rect x="3.5" y="0.2" width="4" height="1.7"/><path d="M1 3.6h9l-0.6 8.2H1.6z"/><g fill="#f75444"><rect x="3" y="5" width="0.8" height="5.3"/><rect x="5.1" y="5" width="0.8" height="5.3"/><rect x="7.2" y="5" width="0.8" height="5.3"/></g></svg>
<div class="a" style="left:276px;top:330px;width:13px;height:13px;border:1px solid #767676;border-radius:2px;background:#fff"></div>
<div class="cell" style="left:304px;top:315px;width:47px;">91</div>
<div class="cell" style="left:351px;top:315px;width:73px;">默认组</div>
<div class="cell" style="left:424px;top:315px;width:116px;">13842066751</div>
<div class="cell" style="left:540px;top:315px;width:117px;">138****6751</div>
<div class="cell" style="left:657px;top:315px;width:199px;">306325901@qq.com</div>
<div class="cell" style="left:856px;top:315px;width:117px;">13842066751</div>
<svg style="position:absolute;left:989px;top:323px" width="30" height="30" viewBox="0 0 30 30"><defs><linearGradient id="g3" x1="0" y1="0" x2="0" y2="1"><stop offset="0" stop-color="#ff4320"/><stop offset="1" stop-color="#ff5f40"/></linearGradient></defs><path d="M0 0h30v30L15 25 0 30z" fill="url(#g3)"/></svg>
<div class="a" style="left:989px;top:328px;width:30px;height:18px;line-height:18px;text-align:center;color:#fff;font-size:11px">推荐</div>
<div class="cell" style="left:1034px;top:315px;width:59px;">1</div>
<div class="cell" style="left:1093px;top:315px;width:59px;">0</div>
<div class="cell" style="left:1152px;top:315px;width:161px;">2023-02-06 17:07:38</div>
<div class="cell" style="left:1313px;top:315px;width:135px;color:#3f8fe6;">123.191.248.51</div>
<div class="cell" style="left:1448px;top:315px;width:161px;">2023-02-06 17:07:26</div>
<div class="cell" style="left:1609px;top:315px;width:136px;color:#3f8fe6;">123.191.248.51</div>
<div class="a" style="left:1761px;top:332px;width:12px;height:12px;border-radius:50%;background:#18bc9c"></div>
<div class="a" style="left:1777px;top:328px;height:20px;line-height:20px;color:#18bc9c;font-size:14px">正常</div>
<div class="a" style="left:1836px;top:327px;width:22px;height:22px;border-radius:3px;background:#18bc9c"></div>
<svg style="position:absolute;left:1841px;top:332px" width="12" height="12" viewBox="0 0 12 12" fill="#fff"><path d="M0.5 11.5L1.46 7.86 8.86 0.46 11.54 3.14 4.14 10.54z"/><path d="M7.6 1.7L10.3 4.4" stroke="#18bc9c" stroke-width="0.7"/><path d="M1.6 8L4 10.4" stroke="#18bc9c" stroke-width="0.5"/></svg>
<div class="a" style="left:1862px;top:327px;width:21px;height:22px;border-radius:3px;background:#f75444"></div>
<svg style="position:absolute;left:1867px;top:332px" width="11" height="12" viewBox="0 0 11 12" fill="#fff"><rect x="0" y="1.6" width="11" height="1.5"/><rect x="3.5" y="0.2" width="4" height="1.7"/><path d="M1 3.6h9l-0.6 8.2H1.6z"/><g fill="#f75444"><rect x="3" y="5" width="0.8" height="5.3"/><rect x="5.1" y="5" width="0.8" height="5.3"/><rect x="7.2" y="5" width="0.8" height="5.3"/></g></svg>
<div class="a" style="left:276px;top:377px;width:13px;height:13px;border:1px solid #767676;border-radius:2px;background:#fff"></div>
<div class="cell" style="left:304px;top:362px;width:47px;">90</div>
<div class="cell" style="left:351px;top:362px;width:73px;">默认组</div>
<div class="cell" style="left:424px;top:362px;width:116px;">18188997555</div>
<div class="cell" style="left:540px;top:362px;width:117px;">18188997555</div>
<div class="cell" style="left:657px;top:362px;width:199px;">865657499@qq.com</div>
<div class="cell" style="left:856px;top:362px;width:117px;">18188997555</div>
<svg style="position:absolute;left:989px;top:370px" width="30" height="30" viewBox="0 0 30 30"><defs><linearGradient id="g4" x1="0" y1="0" x2="0" y2="1"><stop offset="0" stop-color="#ff4320"/><stop offset="1" stop-color="#ff5f40"/></linearGradient></defs><path d="M0 0h30v30L15 25 0 30z" fill="url(#g4)"/></svg>
<div class="a" style="left:989px;top:375px;width:30px;height:18px;line-height:18px;text-align:center;color:#fff;font-size:11px">推荐</div>
<div class="cell" style="left:1034px;top:362px;width:59px;">5</div>
<div class="cell" style="left:1093px;top:362px;width:59px;">0</div>
<div class="cell" style="left:1152px;top:362px;width:161px;">2023-01-30 23:51:30</div>
<div class="cell" style="left:1313px;top:362px;width:135px;color:#3f8fe6;">175.11.219.193</div>
<div class="cell" style="left:1448px;top:362px;width:161px;">2022-11-12 17:30:49</div>
<div class="cell" style="left:1609px;top:362px;width:136px;color:#3f8fe6;">36.47.95.18</div>
<div class="a" style="left:1761px;top:379px;width:12px;height:12px;border-radius:50%;background:#18bc9c"></div>
<div class="a" style="left:1777px;top:375px;height:20px;line-height:20px;color:#18bc9c;font-size:14px">正常</div>
<div class="a" style="left:1836px;top:374px;width:22px;height:22px;border-radius:3px;background:#18bc9c"></div>
<svg style="position:absolute;left:1841px;top:379px" width="12" height="12" viewBox="0 0 12 12" fill="#fff"><path d="M0.5 11.5L1.46 7.86 8.86 0.46 11.54 3.14 4.14 10.54z"/><path d="M7.6 1.7L10.3 4.4" stroke="#18bc9c" stroke-width="0.7"/><path d="M1.6 8L4 10.4" stroke="#18bc9c" stroke-width="0.5"/></svg>
<div class="a" style="left:1862px;top:374px;width:21px;height:22px;border-radius:3px;background:#f75444"></div>
<svg style="position:absolute;left:1867px;top:379px" width="11" height="12" viewBox="0 0 11 12" fill="#fff"><rect x="0" y="1.6" width="11" height="1.5"/><rect x="3.5" y="0.2" width="4" height="1.7"/><path d="M1 3.6h9l-0.6 8.2H1.6z"/><g fill="#f75444"><rect x="3" y="5" width="0.8" height="5.3"/><rect x="5.1" y="5" width="0.8" height="5.3"/><rect x="7.2" y="5" width="0.8" height="5.3"/></g></svg>
<div class="a" style="left:276px;top:424px;width:13px;height:13px;border:1px solid #767676;border-radius:2px;background:#fff"></div>
<div class="cell" style="left:304px;top:409px;width:47px;">88</div>
<div class="cell" style="left:351px;top:409px;width:73px;">默认组</div>
<div class="cell" style="left:424px;top:409px;width:116px;">18555555555</div>
<div class="cell" style="left:540px;top:409px;width:117px;">185****5555</div>
<div class="cell" style="left:657px;top:409px;width:199px;">1111111111111@QQ.COM</div>
<div class="cell" style="left:856px;top:409px;width:117px;">18555555555</div>
<div class="a" style="left:989px;top:417px;width:30px;height:30px;line-height:30px;text-align:center;color:#fff;font-size:14px;background:#c3a2e4">1</div>
<div class="cell" style="left:1034px;top:409px;width:59px;">1</div>
<div class="cell" style="left:1093px;top:409px;width:59px;">0</div>
<div class="cell" style="left:1152px;top:409px;width:161px;">2022-11-20 03:38:18</div>
<div class="cell" style="left:1313px;top:409px;width:135px;color:#3f8fe6;">115.53.54.90</div>
<div class="cell" style="left:1448px;top:409px;width:161px;">2022-10-27 16:27:33</div>
<div class="cell" style="left:1609px;top:409px;width:136px;color:#3f8fe6;">27.191.25.200</div>
<div class="a" style="left:1761px;top:426px;width:12px;height:12px;border-radius:50%;background:#18bc9c"></div>
<div class="a" style="left:1777px;top:422px;height:20px;line-height:20px;color:#18bc9c;font-size:14px">正常</div>
<div class="a" style="left:1836px;top:421px;width:22px;height:22px;border-radius:3px;background:#18bc9c"></div>
<svg style="position:absolute;left:1841px;top:426px" width="12" height="12" viewBox="0 0 12 12" fill="#fff"><path d="M0.5 11.5L1.46 7.86 8.86 0.46 11.54 3.14 4.14 10.54z"/><path d="M7.6 1.7L10.3 4.4" stroke="#18bc9c" stroke-width="0.7"/><path d="M1.6 8L4 10.4" stroke="#18bc9c" stroke-width="0.5"/></svg>
<div class="a" style="left:1862px;top:421px;width:21px;height:22px;border-radius:3px;background:#f75444"></div>
<svg style="position:absolute;left:1867px;top:426px" width="11" height="12" viewBox="0 0 11 12" fill="#fff"><rect x="0" y="1.6" width="11" height="1.5"/><rect x="3.5" y="0.2" width="4" height="1.7"/><path d="M1 3.6h9l-0.6 8.2H1.6z"/><g fill="#f75444"><rect x="3" y="5" width="0.8" height="5.3"/><rect x="5.1" y="5" width="0.8" height="5.3"/><rect x="7.2" y="5" width="0.8" height="5.3"/></g></svg>
<div class="a" style="left:276px;top:471px;width:13px;height:13px;border:1px solid #767676;border-radius:2px;background:#fff"></div>
<div class="cell" style="left:304px;top:456px;width:47px;">87</div>
<div class="cell" style="left:351px;top:456px;width:73px;">默认组</div>
<div class="cell" style="left:424px;top:456px;width:116px;">17728366432</div>
<div class="cell" style="left:540px;top:456px;width:117px;">177****6432</div>
<div class="cell" style="left:657px;top:456px;width:199px;">1261@126.cn</div>
<div class="cell" style="left:856px;top:456px;width:117px;">17728366432</div>
<div class="a" style="left:989px;top:464px;width:30px;height:30px;line-height:30px;text-align:center;color:#fff;font-size:14px;background:#a0a5e4">1</div>
<div class="cell" style="left:1034px;top:456px;width:59px;">1</div>
<div class="cell" style="left:1093px;top:456px;width:59px;">0</div>
<div class="cell" style="left:1152px;top:456px;width:161px;">2022-11-03 02:23:55</div>
<div class="cell" style="left:1313px;top:456px;width:135px;color:#3f8fe6;">36.249.123.140</div>
<div class="cell" style="left:1448px;top:456px;width:161px;">2022-10-26 14:07:03</div>
<div class="cell" style="left:1609px;top:456px;width:136px;color:#3f8fe6;">120.229.239.141</div>
<div class="a" style="left:1761px;top:473px;width:12px;height:12px;border-radius:50%;background:#18bc9c"></div>
<div class="a" style="left:1777px;top:469px;height:20px;line-height:20px;color:#18bc9c;font-size:14px">正常</div>
<div class="a" style="left:1836px;top:468px;width:22px;height:22px;border-radius:3px;background:#18bc9c"></div>
<svg style="position:absolute;left:1841px;top:473px" width="12" height="12" viewBox="0 0 12 12" fill="#fff"><path d="M0.5 11.5L1.46 7.86 8.86 0.46 11.54 3.14 4.14 10.54z"/><path d="M7.6 1.7L10.3 4.4" stroke="#18bc9c" stroke-width="0.7"/><path d="M1.6 8L4 10.4" stroke="#18bc9c" stroke-width="0.5"/></svg>
<div class="a" style="left:1862px;top:468px;width:21px;height:22px;border-radius:3px;background:#f75444"></div>
<svg style="position:absolute;left:1867px;top:473px" width="11" height="12" viewBox="0 0 11 12" fill="#fff"><rect x="0" y="1.6" width="11" height="1.5"/><rect x="3.5" y="0.2" width="4" height="1.7"/><path d="M1 3.6h9l-0.6 8.2H1.6z"/><g fill="#f75444"><rect x="3" y="5" width="0.8" height="5.3"/><rect x="5.1" y="5" width="0.8" height="5.3"/><rect x="7.2" y="5" width="0.8" height="5.3"/></g></svg>
<div class="a" style="left:276px;top:518px;width:13px;height:13px;border:1px solid #767676;border-radius:2px;background:#fff"></div>
<div class="cell" style="left:304px;top:503px;width:47px;">86</div>
<div class="cell" style="left:351px;top:503px;width:73px;">默认组</div>
<div class="cell" style="left:424px;top:503px;width:116px;">15145912345</div>
<div class="cell" style="left:540px;top:503px;width:117px;">151****2345</div>
<div class="cell" style="left:657px;top:503px;width:199px;">126ddc@126.cn</div>
<div class="cell" style="left:856px;top:503px;width:117px;">15145912345</div>
<div class="a" style="left:989px;top:511px;width:30px;height:30px;line-height:30px;text-align:center;color:#fff;font-size:14px;background:#a59fe4">1</div>
<div class="cell" style="left:1034px;top:503px;width:59px;">1</div>
<div class="cell" style="left:1093px;top:503px;width:59px;">0</div>
<div class="cell" style="left:1152px;top:503px;width:161px;">2022-12-14 22:30:00</div>
<div class="cell" style="left:1313px;top:503px;width:135px;color:#3f8fe6;">223.88.121.88</div>
<div class="cell" style="left:1448px;top:503px;width:161px;">2022-09-19 17:57:17</div>
<div class="cell" style="left:1609px;top:503px;width:136px;color:#3f8fe6;">58.8.178.146</div>
<div class="a" style="left:1761px;top:520px;width:12px;height:12px;border-radius:50%;background:#18bc9c"></div>
<div class="a" style="left:1777px;top:516px;height:20px;line-height:20px;color:#18bc9c;font-size:14px">正常</div>
<div class="a" style="left:1836px;top:515px;width:22px;height:22px;border-radius:3px;background:#18bc9c"></div>
<svg style="position:absolute;left:1841px;top:520px" width="12" height="12" viewBox="0 0 12 12" fill="#fff"><path d="M0.5 11.5L1.46 7.86 8.86 0.46 11.54 3.14 4.14 10.54z"/><path d="M7.6 1.7L10.3 4.4" stroke="#18bc9c" stroke-width="0.7"/><path d="M1.6 8L4 10.4" stroke="#18bc9c" stroke-width="0.5"/></svg>
<div class="a" style="left:1862px;top:515px;width:21px;height:22px;border-radius:3px;background:#f75444"></div>
<svg style="position:absolute;left:1867px;top:520px" width="11" height="12" viewBox="0 0 11 12" fill="#fff"><rect x="0" y="1.6" width="11" height="1.5"/><rect x="3.5" y="0.2" width="4" height="1.7"/><path d="M1 3.6h9l-0.6 8.2H1.6z"/><g fill="#f75444"><rect x="3" y="5" width="0.8" height="5.3"/><rect x="5.1" y="5" width="0.8" height="5.3"/><rect x="7.2" y="5" width="0.8" height="5.3"/></g></svg>
<div class="a" style="left:276px;top:565px;width:13px;height:13px;border:1px solid #767676;border-radius:2px;background:#fff"></div>
<div class="cell" style="left:304px;top:550px;width:47px;">85</div>
<div class="cell" style="left:351px;top:550px;width:73px;">默认组</div>
<div class="cell" style="left:424px;top:550px;width:116px;">13212341239</div>
<div class="cell" style="left:540px;top:550px;width:117px;">132****1239</div>
<div class="cell" style="left:657px;top:550px;width:199px;">123456@qq.com</div>
<div class="cell" style="left:856px;top:550px;width:117px;">13212341239</div>
<div class="a" style="left:989px;top:558px;width:30px;height:30px;line-height:30px;text-align:center;color:#fff;font-size:14px;background:#ade19d">1</div>
<div class="cell" style="left:1034px;top:550px;width:59px;">1</div>
<div class="cell" style="left:1093px;top:550px;width:59px;">0</div>
<div class="cell" style="left:1152px;top:550px;width:161px;">2022-10-20 21:50:13</div>
<div class="cell" style="left:1313px;top:550px;width:135px;color:#3f8fe6;">112.224.161.195</div>
<div class="cell" style="left:1448px;top:550px;width:161px;">2022-09-19 17:56:37</div>
<div class="cell" style="left:1609px;top:550px;width:136px;color:#3f8fe6;">58.8.178.146</div>
<div class="a" style="left:1761px;top:567px;width:12px;height:12px;border-radius:50%;background:#18bc9c"></div>
<div class="a" style="left:1777px;top:563px;height:20px;line-height:20px;color:#18bc9c;font-size:14px">正常</div>
<div class="a" style="left:1836px;top:562px;width:22px;height:22px;border-radius:3px;background:#18bc9c"></div>
<svg style="position:absolute;left:1841px;top:567px" width="12" height="12" viewBox="0 0 12 12" fill="#fff"><path d="M0.5 11.5L1.46 7.86 8.86 0.46 11.54 3.14 4.14 10.54z"/><path d="M7.6 1.7L10.3 4.4" stroke="#18bc9c" stroke-width="0.7"/><path d="M1.6 8L4 10.4" stroke="#18bc9c" stroke-width="0.5"/></svg>
<div class="a" style="left:1862px;top:562px;width:21px;height:22px;border-radius:3px;background:#f75444"></div>
<svg style="position:absolute;left:1867px;top:567px" width="11" height="12" viewBox="0 0 11 12" fill="#fff"><rect x="0" y="1.6" width="11" height="1.5"/><rect x="3.5" y="0.2" width="4" height="1.7"/><path d="M1 3.6h9l-0.6 8.2H1.6z"/><g fill="#f75444"><rect x="3" y="5" width="0.8" height="5.3"/><rect x="5.1" y="5" width="0.8" height="5.3"/><rect x="7.2" y="5" width="0.8" height="5.3"/></g></svg>
<div class="a" style="left:276px;top:612px;width:13px;height:13px;border:1px solid #767676;border-radius:2px;background:#fff"></div>
<div class="cell" style="left:304px;top:597px;width:47px;">84</div>
<div class="cell" style="left:351px;top:597px;width:73px;">默认组</div>
<div class="cell" style="left:424px;top:597px;width:116px;">17612341234</div>
<div class="cell" style="left:540px;top:597px;width:117px;">176****1234</div>
<div class="cell" style="left:657px;top:597px;width:199px;">1246@126.cn</div>
<div class="cell" style="left:856px;top:597px;width:117px;">17612341234</div>
<div class="a" style="left:989px;top:605px;width:30px;height:30px;line-height:30px;text-align:center;color:#fff;font-size:14px;background:#e39dc1">1</div>
<div class="cell" style="left:1034px;top:597px;width:59px;">1</div>
<div class="cell" style="left:1093px;top:597px;width:59px;">0</div>
<div class="cell" style="left:1152px;top:597px;width:161px;">2022-10-21 22:35:08</div>
<div class="cell" style="left:1313px;top:597px;width:135px;color:#3f8fe6;">219.92.151.138</div>
<div class="cell" style="left:1448px;top:597px;width:161px;">2022-09-19 17:56:20</div>
<div class="cell" style="left:1609px;top:597px;width:136px;color:#3f8fe6;">171.210.241.168</div>
<div class="a" style="left:1761px;top:614px;width:12px;height:12px;border-radius:50%;background:#18bc9c"></div>
<div class="a" style="left:1777px;top:610px;height:20px;line-height:20px;color:#18bc9c;font-size:14px">正常</div>
<div class="a" style="left:1836px;top:609px;width:22px;height:22px;border-radius:3px;background:#18bc9c"></div>
<svg style="position:absolute;left:1841px;top:614px" width="12" height="12" viewBox="0 0 12 12" fill="#fff"><path d="M0.5 11.5L1.46 7.86 8.86 0.46 11.54 3.14 4.14 10.54z"/><path d="M7.6 1.7L10.3 4.4" stroke="#18bc9c" stroke-width="0.7"/><path d="M1.6 8L4 10.4" stroke="#18bc9c" stroke-width="0.5"/></svg>
<div class="a" style="left:1862px;top:609px;width:21px;height:22px;border-radius:3px;background:#f75444"></div>
<svg style="position:absolute;left:1867px;top:614px" width="11" height="12" viewBox="0 0 11 12" fill="#fff"><rect x="0" y="1.6" width="11" height="1.5"/><rect x="3.5" y="0.2" width="4" height="1.7"/><path d="M1 3.6h9l-0.6 8.2H1.6z"/><g fill="#f75444"><rect x="3" y="5" width="0.8" height="5.3"/><rect x="5.1" y="5" width="0.8" height="5.3"/><rect x="7.2" y="5" width="0.8" height="5.3"/></g></svg>
<div class="a" style="left:260px;top:643px;width:1630px;height:17px;background:#f1f1f1"></div>
<div class="a" style="left:277px;top:646px;width:1587px;height:13px;background:#c1c1c1"></div>
<svg style="position:absolute;left:266px;top:648px" width="5" height="8" viewBox="0 0 5 8" fill="#a3a3a3"><path d="M5 0v8L0 4z"/></svg>
<svg style="position:absolute;left:1880px;top:648px" width="5" height="8" viewBox="0 0 5 8" fill="#505050"><path d="M0 0v8l5-4z"/></svg>
<div class="a" style="left:260px;top:678px;height:20px;line-height:20px;font-size:14px;color:#333;white-space:nowrap">显示第 1 到第 10 条记录，总共 89 条记录 每页显示</div>
<div class="a" style="left:583px;top:673px;width:52px;height:33px;border:1px solid #ddd;border-radius:3px;background:#f4f4f4;line-height:31px;font-size:14px;color:#333;padding-left:13px">10</div>
<svg style="position:absolute;left:613px;top:686px" width="8" height="4" viewBox="0 0 8 4" fill="#333"><path d="M0 4h8L4 0z"/></svg>
<div class="a" style="left:639px;top:678px;height:20px;line-height:20px;font-size:14px;color:#333">条记录</div>
<div class="pg" style="left:1410px;width:67px;border-right:none;">上一页</div>
<div class="pg" style="left:1477px;width:33px;border-right:none;background:#444c69;border-color:#444c69;color:#fff;z-index:2">1</div>
<div class="pg" style="left:1510px;width:33px;border-right:none;">2</div>
<div class="pg" style="left:1543px;width:33px;border-right:none;">3</div>
<div class="pg" style="left:1576px;width:33px;border-right:none;">4</div>
<div class="pg" style="left:1609px;width:33px;border-right:none;">5</div>
<div class="pg" style="left:1642px;width:36px;border-right:none;background:#fff">...</div>
<div class="pg" style="left:1678px;width:33px;border-right:none;">9</div>
<div class="pg" style="left:1711px;width:67px;">下一页</div>
<div class="a" style="left:1783px;top:671px;width:50px;height:33px;border:1px solid #ccd4dd;background:#fff"></div>
<div class="a" style="left:1838px;top:672px;width:52px;height:33px;border:1px solid #ddd;border-radius:3px;background:#f4f4f4;line-height:31px;text-align:center;font-size:14px;color:#333">跳转</div>
<div class="a" style="left:893px;top:403px;height:50px;line-height:50px;letter-spacing:0.7px;font-size:35px;-webkit-text-stroke:0.6px #ff0000;color:#ff0000;white-space:nowrap;z-index:5">515源码</div>
<div class="a" style="left:858px;top:505px;height:50px;line-height:50px;letter-spacing:0.5px;font-size:37px;-webkit-text-stroke:0.6px #ff0000;color:#ff0000;white-space:nowrap;z-index:5">515ym.com</div>
</body></html>
